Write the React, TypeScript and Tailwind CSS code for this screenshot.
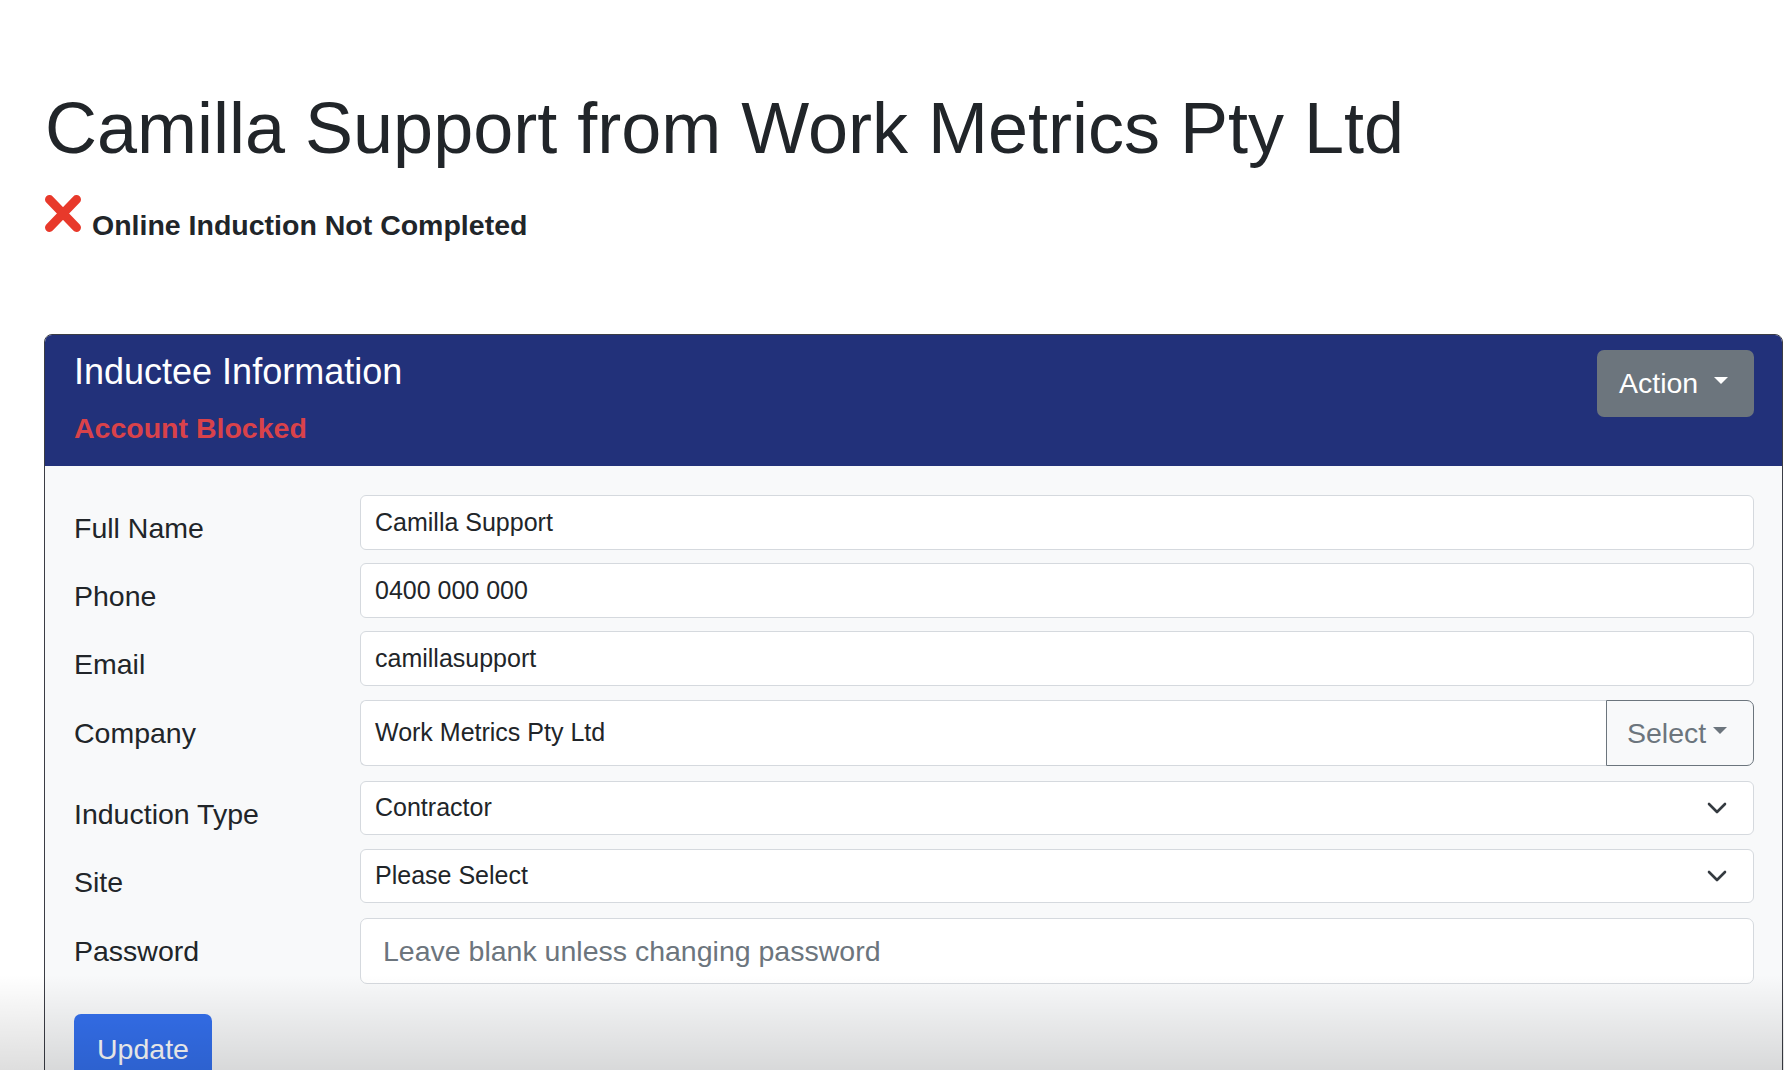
import React from 'react';

const FONT = "font-['Liberation_Sans',Arial,sans-serif]";

function Caret({ className }: { className: string }) {
  return (
    <span
      className={`inline-block h-0 w-0 border-x-[7.5px] border-t-[7px] border-x-transparent ${className}`}
    />
  );
}

function Chevron() {
  return (
    <svg width="20" height="12" viewBox="0 0 20 12" className="shrink-0">
      <path d="M2 2l8 8 8-8" fill="none" stroke="#343a40" strokeWidth="2.6" strokeLinecap="round" strokeLinejoin="round" />
    </svg>
  );
}

function CrossMark() {
  return (
    <svg width="38" height="39" viewBox="0 0 38 39" className="-mt-[10px] shrink-0">
      <path d="M5.5 5.5L32.5 33.5M32.5 5.5L5.5 33.5" stroke="#e8392b" strokeWidth="9" strokeLinecap="round" />
    </svg>
  );
}

function Row({ label, children, extra = '' }: { label: string; children: React.ReactNode; extra?: string }) {
  return (
    <div className={`flex items-start ${extra}`}>
      <label className="w-[286px] shrink-0 pt-[12px] pb-[13px] text-[28.5px] leading-[43px] text-[#212529]">
        {label}
      </label>
      <div className="min-w-0 flex-1">{children}</div>
    </div>
  );
}

function TextBox({ value }: { value: string }) {
  return (
    <div className="flex h-[55px] items-center rounded-[6px] border border-[#d5d9de] bg-white px-[14px] text-[25px] text-[#212529]">
      {value}
    </div>
  );
}

function SelectBox({ value }: { value: string }) {
  return (
    <div className="flex h-[54px] items-center justify-between rounded-[6px] border border-[#d5d9de] bg-white pl-[14px] pr-[26px] text-[25px] text-[#212529]">
      <span>{value}</span>
      <Chevron />
    </div>
  );
}

export default function App() {
  return (
    <div className={`relative h-[1070px] overflow-hidden bg-white text-[#212529] ${FONT}`}>
      <div className="pl-[44px] pr-px pt-[85px]">
        <h1 className="ml-px text-[72px] leading-[86px] font-normal">Camilla Support from Work Metrics Pty Ltd</h1>

        <div className="mt-[33px] flex items-start gap-[10px]">
          <CrossMark />
          <span className="text-[28.5px] font-bold leading-[43px]">Online Induction Not Completed</span>
        </div>

        <section className="mt-[87px] overflow-hidden rounded-[8px] border border-[#3b3d45]">
          <div className="flex items-start justify-between bg-[#22317a] pb-[16px] pl-[29px] pr-[28px] pt-[15px]">
            <div>
              <h5 className="text-[36px] leading-[43px] text-white">Inductee Information</h5>
              <div className="mt-[14px] text-[28.5px] font-bold leading-[43px] text-[#d9424a]">Account Blocked</div>
            </div>
            <button className="flex h-[67px] w-[157px] items-center rounded-[7px] bg-[#6c757d] pl-[22px] text-[28.5px] text-white">
              <span>Action</span>
              <Caret className="mb-[6px] ml-[16px] border-t-white" />
            </button>
          </div>

          <div className="bg-[#f8f9fa] pb-[40px] pl-[29px] pr-[28px] pt-[29px]">
            <Row label="Full Name">
              <TextBox value="Camilla Support" />
            </Row>
            <Row label="Phone">
              <TextBox value="0400 000 000" />
            </Row>
            <Row label="Email">
              <TextBox value="camillasupport" />
            </Row>
            <Row label="Company" extra="mt-px pb-[13px]">
              <div className="flex h-[66px]">
                <div className="flex flex-1 items-center rounded-l-[6px] border border-r-0 border-[#d5d9de] bg-white px-[14px] text-[25px]">
                  Work Metrics Pty Ltd
                </div>
                <button className="flex w-[148px] items-center rounded-r-[7px] border border-[#6c757d] pl-[20px] text-[28.5px] text-[#6c757d]">
                  <span>Select</span>
                  <Caret className="mb-[6px] ml-[7px] border-t-[#6c757d]" />
                </button>
              </div>
            </Row>
            <Row label="Induction Type">
              <SelectBox value="Contractor" />
            </Row>
            <Row label="Site">
              <SelectBox value="Please Select" />
            </Row>
            <Row label="Password" extra="mt-px">
              <div className="flex h-[66px] items-center rounded-[7px] border border-[#d5d9de] bg-white px-[22px] text-[28.5px] text-[#6c757d]">
                Leave blank unless changing password
              </div>
            </Row>
            <button className="mt-[28px] h-[71px] rounded-[7px] bg-[#3470ee] px-[23px] text-[28.5px] text-white">
              Update
            </button>
          </div>
        </section>
      </div>

      <div className="pointer-events-none absolute inset-x-0 bottom-0 h-[95px] bg-linear-to-b from-transparent to-black/[0.13]" />
    </div>
  );
}
